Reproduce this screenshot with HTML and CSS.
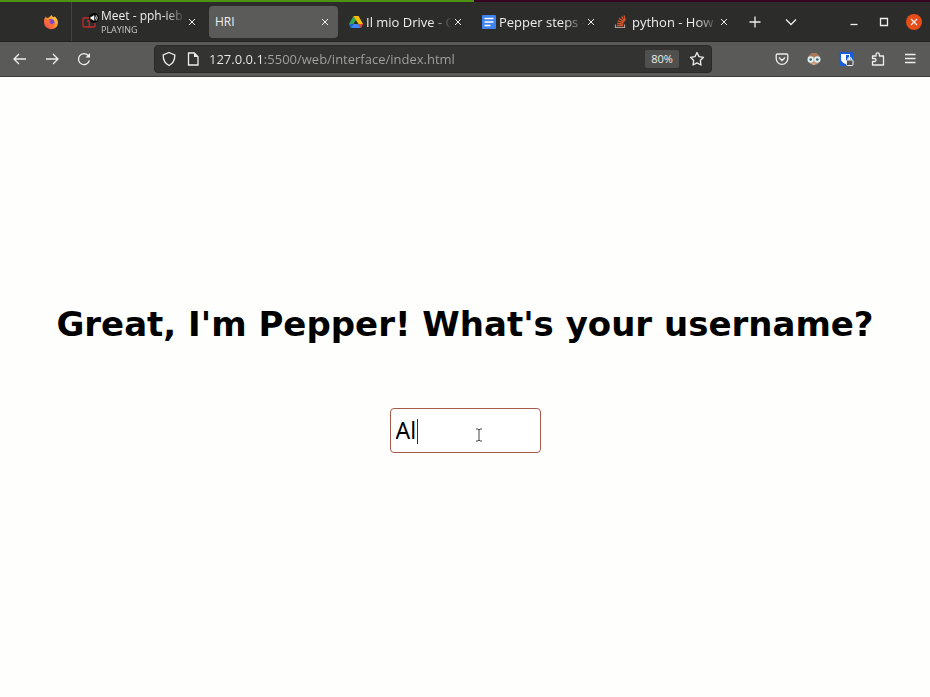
FILE: index.html
```html
<!DOCTYPE html>
<html lang="en">
<head>
<meta charset="utf-8">
<title>HRI</title>
<link rel="stylesheet" href="styles.css">
</head>
<body>
<div class="desktop-edge"></div>
<header class="browser">
  <div class="tab-bar">
    <div class="pinned">
      <svg class="icon" viewBox="0 0 16 16" aria-hidden="true">
        <defs>
          <linearGradient id="fire" x1="1" y1="0" x2="0" y2="1"><stop offset="0" stop-color="#ffe14a"/><stop offset=".45" stop-color="#ff9427"/><stop offset="1" stop-color="#f0355c"/></linearGradient>
        </defs>
        <path d="M1.200 5 2.800 2.600 3.800 4Q5 3.300 6 3.500 7 2 8.800 1 9 3 11 3.600L11.600 2.200Q15 5 15 9 14.400 15 8 15.200 1.400 14.800 1 8.600 1 6.500 1.200 5Z" fill="url(#fire)"/>
        <circle cx="8" cy="8.600" r="3.600" fill="#7548d8"/>
        <path d="M3.600 6.500Q5.500 5.500 7.800 6.800L6.500 8.200Q7.300 10.500 9.600 9.800L11.600 8.400Q11.800 12 8.500 12.500 4.200 12.500 3.600 6.500Z" fill="#ff6a35"/>
        <path d="M8 4.500Q11.500 4.500 12 8.500 13.500 6.200 11.500 3.800L9 2.500Z" fill="#ffbd35"/>
      </svg>
    </div>
    <div class="tab">
      <span class="favicon">
        <svg class="icon" viewBox="0 0 16 16" fill="none" stroke="#c32b2b" stroke-width="1.300" aria-hidden="true"><rect x="1" y="4" width="12" height="9" rx="1"/><path d="M5 7.500 7.300 6v7"/></svg>
        <svg class="audio" viewBox="0 0 10 10" aria-hidden="true"><circle cx="5" cy="5" r="5" fill="#080808"/><path d="M1.500 3.800H3L5.200 2v6L3 6.200H1.500Z" fill="#fff"/><path d="M6.200 3.500q1.300 1.500 0 3M7.200 2.300q2.300 2.700 0 5.400" fill="none" stroke="#fff" stroke-width=".8"/></svg>
      </span>
      <span class="label stacked"><span class="title">Meet - pph-ieb</span><span class="status">PLAYING</span></span>
      <button class="close" aria-label="Close tab"><svg viewBox="0 0 8 8"><path d="m1 1 6 6M7 1 1 7"/></svg></button>
    </div>
    <div class="tab active">
      <span class="label">HRI</span>
      <button class="close" aria-label="Close tab"><svg viewBox="0 0 8 8"><path d="m1 1 6 6M7 1 1 7"/></svg></button>
    </div>
    <div class="tab">
      <svg class="icon" viewBox="0 0 16 16" aria-hidden="true"><path d="M5.500 2h5L8 6Z" fill="#188038"/><path d="M5.500 2 8 6.200 3 14 1 10Z" fill="#34a853"/><path d="M10.500 2 15 10H10.300L7.900 6.200 5.500 2Z" fill="#fbbc04"/><path d="M1 10h4.700L3 14Z" fill="#1967d2"/><path d="M5.700 10H10.300L13 14H3Z" fill="#4285f4"/><path d="M10.300 10H15L13 14Z" fill="#ea4335"/><path d="m8 6.400 2.300 3.600H5.700Z" fill="#2d2d2c"/></svg>
      <span class="label">Il mio Drive - C</span>
      <button class="close" aria-label="Close tab"><svg viewBox="0 0 8 8"><path d="m1 1 6 6M7 1 1 7"/></svg></button>
    </div>
    <div class="tab">
      <svg class="icon docs" viewBox="0 0 16 16" aria-hidden="true"><rect x="1" y="1" width="14" height="14" rx="1" fill="#3f83ee"/><path d="M3.500 4.500h9M3.500 8h9M3.500 11.500h6" stroke="#fff" stroke-width="1.700"/></svg>
      <span class="label">Pepper steps -</span>
      <button class="close" aria-label="Close tab"><svg viewBox="0 0 8 8"><path d="m1 1 6 6M7 1 1 7"/></svg></button>
    </div>
    <div class="tab">
      <svg class="icon" viewBox="0 0 16 16" fill="none" aria-hidden="true"><path d="M1.500 10.500v3h9v-3" stroke="#a99f96" stroke-width="1.200"/><path d="M3 11.500h6M3.200 9.300l6 .8M3.800 6.800l5.700 2M5 4.300l5 3.700M7.500 2.500l3.200 4.800M10 1.500l1.200 5" stroke="#d9562b" stroke-width="1.300"/></svg>
      <span class="label">python - How c</span>
      <button class="close" aria-label="Close tab"><svg viewBox="0 0 8 8"><path d="m1 1 6 6M7 1 1 7"/></svg></button>
    </div>
    <div class="tab-actions">
      <button class="tool" aria-label="New tab"><svg viewBox="0 0 16 16"><path d="M8 2.500v11M2.500 8h11"/></svg></button>
      <button class="tool" aria-label="List all tabs"><svg viewBox="0 0 16 16"><path d="m3 5.500 5 5 5-5"/></svg></button>
    </div>
    <div class="window-actions">
      <button class="tool" aria-label="Minimize"><svg viewBox="0 0 16 16"><path d="M4.500 10.500h7"/></svg></button>
      <button class="tool" aria-label="Maximize"><svg viewBox="0 0 16 16"><path d="M4.500 4.500h7v7h-7z"/></svg></button>
      <button class="tool quit" aria-label="Close window"><svg viewBox="0 0 16 16"><path d="m5 5 6 6M11 5l-6 6"/></svg></button>
    </div>
  </div>
  <div class="toolbar">
    <div class="navigation">
      <button class="tool" aria-label="Back"><svg viewBox="0 0 16 16"><path d="M14 8H2.500M7 3 2 8l5 5"/></svg></button>
      <button class="tool" aria-label="Forward"><svg viewBox="0 0 16 16"><path d="M2 8h11.500M9 3l5 5-5 5"/></svg></button>
      <button class="tool" aria-label="Reload"><svg viewBox="0 0 16 16"><path d="M13.300 9.500A5.500 5.500 0 1 1 12 4.300L13.500 6"/><path class="solid" d="M14 2v4.500H9.500Z"/></svg></button>
    </div>
    <div class="address">
      <svg class="icon line" viewBox="0 0 16 16" aria-hidden="true"><path d="M8 1.500 13.800 4Q14 11.500 8 14.500 2 11.500 2.200 4Z"/></svg>
      <svg class="icon line" viewBox="0 0 16 16" aria-hidden="true"><path d="M3.500 2h5.800L13 5.700V14H3.500Z"/><path class="solid" d="M9 2v4h4Z"/></svg>
      <input class="url" type="text" aria-label="Address" value="127.0.0.1:5500/web/interface/index.html">
      <button class="zoom">80%</button>
      <button class="tool" aria-label="Bookmark this page"><svg viewBox="0 0 16 16"><path d="m8 1.500 2 4.100 4.500.7-3.200 3.200.7 4.500-4-2.100L4 14l.7-4.500L1.500 6.300 6 5.600Z" stroke-linejoin="round"/></svg></button>
    </div>
    <div class="extensions">
      <button class="tool" aria-label="Save to Pocket"><svg viewBox="0 0 16 16"><path d="M3.500 3h9a1.300 1.300 0 0 1 1.300 1.300V7.500a5.800 5.800 0 0 1-11.600 0V4.300A1.300 1.300 0 0 1 3.500 3ZM5 6.500l3 3 3-3"/></svg></button>
      <button class="tool" aria-label="Account extension"><svg viewBox="0 0 16 16" stroke="none"><circle cx="8" cy="8" r="6" fill="#c68a69"/><path d="M2.300 6Q4 2 8 2t5.700 4Z" fill="#a9795b"/><circle cx="4.700" cy="8.500" r="3.200" fill="#d9f0f3"/><circle cx="11.300" cy="8.500" r="3.200" fill="#d9f0f3"/><circle cx="4.700" cy="8.500" r="1.300" fill="#48606a"/><circle cx="11.300" cy="8.500" r="1.300" fill="#48606a"/><path d="M5.500 12.500h5L8 14Z" fill="#d4c2a8"/></svg></button>
      <button class="tool" aria-label="Password manager"><svg viewBox="0 0 16 16" stroke="none"><rect x="1" y="1" width="14" height="14" rx="1" fill="#175ddc"/><path d="M3 3h9v5q-1 4-4.500 5Q3 11 3 8Z" fill="#fff"/><path d="M8 4h3v4q-1 2-3 3Z" fill="#175ddc"/><rect x="8.500" y="9" width="6.500" height="5.500" rx="1" fill="#555" stroke="#eee"/><path d="M10 9V7.500q1.700-2 3.400 0V9" fill="none" stroke="#eee" stroke-width="1.200"/></svg></button>
      <button class="tool" aria-label="Extensions"><svg viewBox="0 0 16 16"><path d="M2.500 14V10.500H4.500a1.500 1.500 0 0 0 0-3H2.500V5H6V3.500a1.700 1.700 0 0 1 3.400 0V5H13.500V14Z" stroke-linejoin="round"/></svg></button>
      <button class="tool" aria-label="Open application menu"><svg viewBox="0 0 16 16"><path d="M3 3.500h10.500M3 7.500h10.500M3 11.500h10.500"/></svg></button>
    </div>
  </div>
</header>
<main class="page">
  <h1><label for="username">Great, I'm Pepper! What's your username?</label></h1>
  <div class="field">
    <input id="username" type="text" value="Al" autocomplete="off">
    <span class="caret"></span>
    <svg class="pointer" viewBox="0 0 8 14" aria-hidden="true"><path d="M1 1h2l1 1 1-1h2M4 2v10M1 13h2l1-1 1 1h2" fill="none" stroke="#444"/></svg>
  </div>
</main>
</body>
</html>
```
FILE: styles.css
```css
* {
  box-sizing: border-box;
}

body {
  margin: 0;
  min-height: 100vh;
  display: flex;
  flex-direction: column;
  background: #fefffc;
  font-family: "Open Sans", "Noto Sans", sans-serif;
}

button,
input {
  margin: 0;
  padding: 0;
  border: 0;
  background: none;
  color: inherit;
  font: inherit;
}

.desktop-edge {
  height: 2px;
  background: linear-gradient(90deg, #4c9410 51%, #35051f 51%);
}

.browser {
  color: #eeeeec;
  font-size: 13px;
}

.tab-bar {
  display: flex;
  align-items: center;
  gap: 4px;
  height: 39px;
  padding-right: 6px;
  background: #2c2c2b;
}

.pinned {
  display: flex;
  align-items: center;
  justify-content: flex-end;
  width: 72px;
  height: 100%;
  padding-right: 12px;
  border-right: 1px solid #444442;
}

.icon {
  display: block;
  flex: none;
  width: 16px;
  height: 16px;
}

.tab {
  display: flex;
  align-items: center;
  flex: 0 1 129px;
  min-width: 0;
  height: 32px;
  padding: 0 7px 0 6px;
  border-radius: 4px;
}

.tab.active {
  background: #5b5b59;
  font-size: 12px;
}

.favicon {
  position: relative;
}

.audio {
  position: absolute;
  top: -1px;
  right: -1px;
  width: 10px;
  height: 10px;
}

.label {
  flex: 1;
  min-width: 0;
  overflow: hidden;
  white-space: nowrap;
}

.icon + .label {
  margin-left: 2px;
}

.tab:not(.active) .label {
  -webkit-mask-image: linear-gradient(90deg, #000 75%, transparent);
  mask-image: linear-gradient(90deg, #000 75%, transparent);
}

.stacked {
  display: flex;
  flex-direction: column;
  margin-left: 3px;
}

.title {
  font-size: 12px;
  line-height: 16px;
}

.status {
  color: #c8c8c5;
  font-size: 9px;
  line-height: 12px;
}

.close {
  display: grid;
  place-items: center;
  flex: none;
  width: 12px;
  height: 16px;
}

.close svg {
  width: 8px;
  height: 8px;
  stroke: #eeeeec;
}

.tool {
  display: grid;
  place-items: center;
  flex: none;
  width: 20px;
  height: 20px;
}

.tool svg {
  width: 16px;
  height: 16px;
}

.tool svg:not([stroke]),
.line {
  fill: none;
  stroke: #eeeeec;
  stroke-width: 1.3;
}

.solid {
  fill: #eeeeec;
  stroke: none;
}

.tab-actions {
  display: flex;
  gap: 16px;
  margin-left: 4px;
}

.window-actions {
  display: flex;
  gap: 10px;
  margin-left: auto;
}

.quit svg {
  border-radius: 50%;
  background: #e64d19;
}

.toolbar {
  display: flex;
  align-items: center;
  gap: 60px;
  height: 36px;
  padding: 0 10px;
  border-top: 1px solid #232322;
  border-bottom: 1px solid #3c3c3a;
  background: #5a5a58;
}

.navigation,
.extensions {
  display: flex;
  gap: 12px;
}

.address {
  display: flex;
  flex: 1;
  align-items: center;
  gap: 8px;
  min-width: 0;
  height: 28px;
  padding: 0 4px 0 6px;
  border: 1px solid #292928;
  border-radius: 4px;
  background: #333331;
}

.url {
  flex: 1;
  min-width: 0;
  background: linear-gradient(90deg, #eeeeec 56px, #a3a3a0 56px);
  -webkit-background-clip: text;
  background-clip: text;
  color: transparent;
}

.zoom {
  width: 34px;
  height: 18px;
  border-radius: 2px;
  background: #50504e;
  font-size: 11px;
  line-height: 18px;
}

.page {
  display: flex;
  flex: 1;
  flex-direction: column;
  align-items: center;
  justify-content: center;
  gap: 60px;
  padding: 0 16px 22px;
  font-family: "DejaVu Sans", sans-serif;
}

h1 {
  margin: 0;
  color: #000;
  font-size: 34px;
  line-height: 48px;
  text-align: center;
}

.field {
  position: relative;
}

#username {
  display: block;
  width: 151px;
  height: 45px;
  padding: 0 5px;
  border: 1px solid #a65a4a;
  border-radius: 4px;
  outline: 0;
  background: #fff;
  color: #000;
  font-family: "Noto Sans", sans-serif;
  font-size: 23px;
}

.caret {
  position: absolute;
  top: 11px;
  left: 27px;
  width: 1px;
  height: 25px;
  background: #333;
}

.pointer {
  position: absolute;
  top: 20px;
  left: 85px;
  width: 8px;
  height: 14px;
}
```
